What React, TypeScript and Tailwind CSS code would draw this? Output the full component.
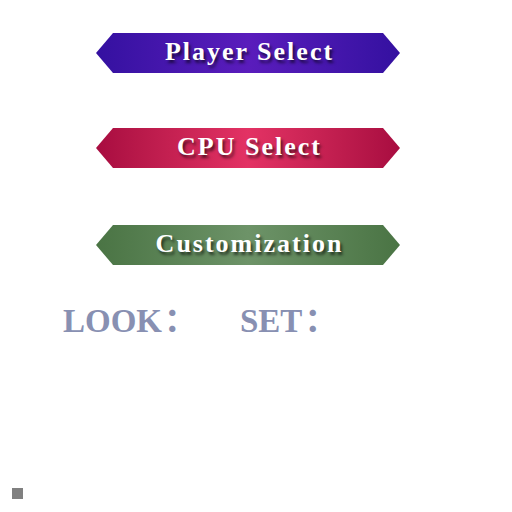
import React from "react"

const shape =
  "[clip-path:polygon(17px_0,calc(100%-17px)_0,100%_50%,calc(100%-17px)_100%,17px_100%,0_50%)]"

function MenuButton({ label, tone }: { label: string; tone: string }) {
  return (
    <div
      className={`${shape} ${tone} flex h-10 w-[304px] items-center justify-center pb-[3px] pl-[3px] font-['Liberation_Serif',serif] text-[26px] font-bold tracking-[2px] text-white [text-shadow:2px_3px_3px_rgba(0,0,0,0.6)]`}
    >
      {label}
    </div>
  )
}

function Field({ label, width }: { label: string; width: string }) {
  return (
    <span className={`flex items-center ${width}`}>
      {label}
      <span className="relative -top-[2px] ml-[2px] font-['Noto_Sans_CJK_JP',sans-serif] [font-feature-settings:'palt']">：</span>
    </span>
  )
}

export default function App() {
  return (
    <div className="relative h-[512px] w-[512px] bg-white">
      <div className="flex flex-col pl-[96px] pt-[33px]">
        <MenuButton label="Player Select" tone="bg-linear-to-r from-[#3410a0] via-[#5a1cbc] to-[#3410a0]" />
        <div className="h-[55px]" />
        <MenuButton label="CPU Select" tone="bg-linear-to-r from-[#a80c40] via-[#e33264] to-[#a80c40]" />
        <div className="h-[57px]" />
        <MenuButton label="Customization" tone="bg-linear-to-r from-[#4a7444] via-[#6d9368] to-[#4a7444]" />
      </div>
      <div className="mt-[40px] flex pl-[63px] font-['Liberation_Serif',serif] text-[33px] font-bold leading-none text-[#8890b2]">
        <Field label="LOOK" width="w-[177px]" />
        <Field label="SET" width="" />
      </div>
      <div className="absolute left-[12px] top-[488px] h-[11px] w-[11px] bg-[#808080]" />
    </div>
  )
}
